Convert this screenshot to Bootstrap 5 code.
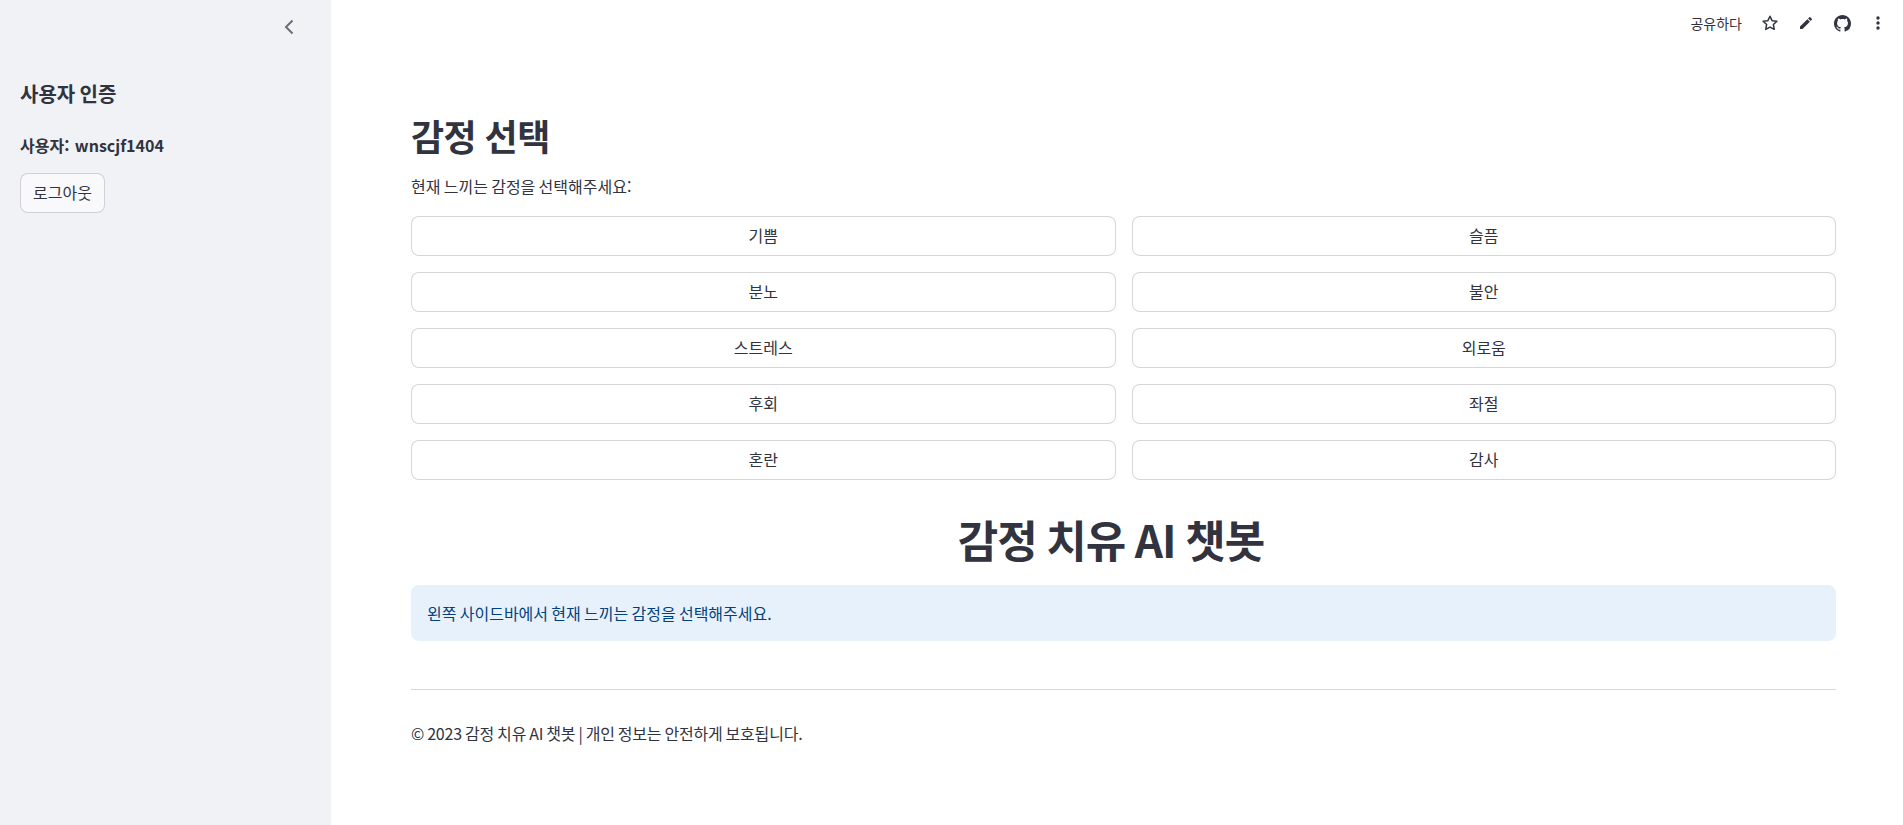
<!DOCTYPE html>
<html lang="ko">
<head>
<meta charset="utf-8">
<title>감정 치유 AI 챗봇</title>
<link href="https://cdn.jsdelivr.net/npm/bootstrap@5.3.0/dist/css/bootstrap.min.css" rel="stylesheet">
<style>
html,body{height:825px;overflow:hidden;}
body{font-family:"Noto Sans CJK KR","Noto Sans",sans-serif;color:#31333f;background:#fff;font-size:16px;word-spacing:-1.2px;}
.side-panel{width:331px;height:825px;background:#f0f2f6;padding:0 20px;flex:none;}
.collapse-row{height:54px;padding-right:12px;}
.side-title{font-size:20px;font-weight:600;line-height:28px;margin:26px 0 0;color:#31333f;}
.side-user{font-size:16px;font-weight:600;line-height:24px;margin:25px 0 0;word-spacing:1px;}
.st-btn{background:#fff;border:1px solid rgba(49,51,63,.2);border-radius:8px;color:#31333f;font-size:16px;line-height:24px;padding:0 0 3px;}
.logout-btn{background:#f9f9fb;margin-top:16px;height:40px;width:85px;}
.main-area{min-width:0;position:relative;}
.top-actions{position:absolute;top:0;right:0;height:46px;padding-right:7px;font-size:14px;}
.share-text{font-size:14px;margin-right:10px;}
.tool-icon{width:36px;display:flex;justify-content:center;}
.page-body{padding:109px 67px 0 80px;}
.h-select{font-size:36px;font-weight:700;line-height:52px;margin:0;letter-spacing:-.5px;}
.cap{font-size:16px;line-height:24px;margin:13px 0 18px;}
.emo-grid{display:grid;grid-template-columns:1fr 1fr;column-gap:16px;row-gap:16px;}
.emo-grid .st-btn{height:40px;width:100%;}
.h-main{font-size:44px;font-weight:700;line-height:64px;text-align:center;margin:27px 0 0;padding-right:25px;letter-spacing:-.9px;word-spacing:-2px;}
.info-box{background:#e7f1fb;color:#004280;border-radius:8px;height:56px;padding:0 16px 1px;margin-top:14px;font-size:16px;display:flex;align-items:center;}
.rule{border:0;border-top:1px solid rgba(49,51,63,.2);opacity:1;margin:48px 0 0;}
.foot{font-size:16px;line-height:24px;margin:31px 0 0;letter-spacing:-.2px;}
</style>
</head>
<body>
<div class="d-flex">
  <aside class="side-panel">
    <div class="collapse-row d-flex justify-content-end align-items-center">
      <svg width="20" height="20" viewBox="0 0 20 20" fill="none" stroke="#6b6d78" stroke-width="2"><path d="M13.5 3.5L7 10l6.500 6.500"/></svg>
    </div>
    <h2 class="side-title">사용자 인증</h2>
    <p class="side-user">사용자: wnscjf1404</p>
    <button class="st-btn logout-btn d-block" type="button">로그아웃</button>
  </aside>
  <main class="main-area flex-grow-1">
    <div class="top-actions d-flex align-items-center">
      <span class="share-text">공유하다</span>
      <span class="tool-icon"><svg width="18" height="18" viewBox="0 0 24 24" fill="none" stroke="#31333f" stroke-width="2" stroke-linejoin="round"><path d="M12 3l2.8 5.9 6.4.8-4.7 4.4 1.2 6.4L12 17.4l-5.7 3.1 1.2-6.4-4.7-4.4 6.4-.8z"/></svg></span>
      <span class="tool-icon"><svg width="16" height="16" viewBox="0 0 24 24" fill="#31333f"><path d="M3 17.25V21h3.75L17.81 9.94l-3.75-3.75L3 17.25zM20.71 7.04a1 1 0 0 0 0-1.41l-2.34-2.34a1 1 0 0 0-1.41 0l-1.83 1.83 3.75 3.75 1.83-1.83z"/></svg></span>
      <span class="tool-icon"><svg width="17" height="17" viewBox="0 0 16 16" fill="#31333f"><path d="M8 0C3.58 0 0 3.58 0 8c0 3.54 2.29 6.53 5.47 7.59.4.07.55-.17.55-.38 0-.19-.01-.82-.01-1.49-2.01.37-2.53-.49-2.69-.94-.09-.23-.48-.94-.82-1.13-.28-.15-.68-.52-.01-.53.63-.01 1.08.58 1.23.82.72 1.21 1.87.87 2.33.66.07-.52.28-.87.51-1.07-1.78-.2-3.64-.89-3.64-3.95 0-.87.31-1.59.82-2.15-.08-.2-.36-1.02.08-2.12 0 0 .67-.21 2.2.82.64-.18 1.32-.27 2-.27s1.36.09 2 .27c1.53-1.04 2.2-.82 2.2-.82.44 1.1.16 1.92.08 2.12.51.56.82 1.27.82 2.15 0 3.07-1.87 3.75-3.65 3.95.29.25.54.73.54 1.48 0 1.07-.01 1.93-.01 2.2 0 .21.15.46.55.38A8.01 8.01 0 0 0 16 8c0-4.42-3.58-8-8-8z"/></svg></span>
      <span class="tool-icon"><svg width="16" height="16" viewBox="0 0 16 16" fill="#31333f"><circle cx="8" cy="3" r="1.7"/><circle cx="8" cy="8" r="1.7"/><circle cx="8" cy="13" r="1.7"/></svg></span>
    </div>
    <div class="page-body">
      <h1 class="h-select">감정 선택</h1>
      <p class="cap">현재 느끼는 감정을 선택해주세요:</p>
      <div class="emo-grid">
        <button class="st-btn" type="button">기쁨</button>
        <button class="st-btn" type="button">슬픔</button>
        <button class="st-btn" type="button">분노</button>
        <button class="st-btn" type="button">불안</button>
        <button class="st-btn" type="button">스트레스</button>
        <button class="st-btn" type="button">외로움</button>
        <button class="st-btn" type="button">후회</button>
        <button class="st-btn" type="button">좌절</button>
        <button class="st-btn" type="button">혼란</button>
        <button class="st-btn" type="button">감사</button>
      </div>
      <h1 class="h-main">감정 치유 AI 챗봇</h1>
      <div class="info-box">왼쪽 사이드바에서 현재 느끼는 감정을 선택해주세요.</div>
      <hr class="rule">
      <p class="foot">© 2023 감정 치유 AI 챗봇 | 개인 정보는 안전하게 보호됩니다.</p>
    </div>
  </main>
</div>
<script src="https://cdn.jsdelivr.net/npm/bootstrap@5.3.0/dist/js/bootstrap.bundle.min.js"></script>
</body>
</html>
